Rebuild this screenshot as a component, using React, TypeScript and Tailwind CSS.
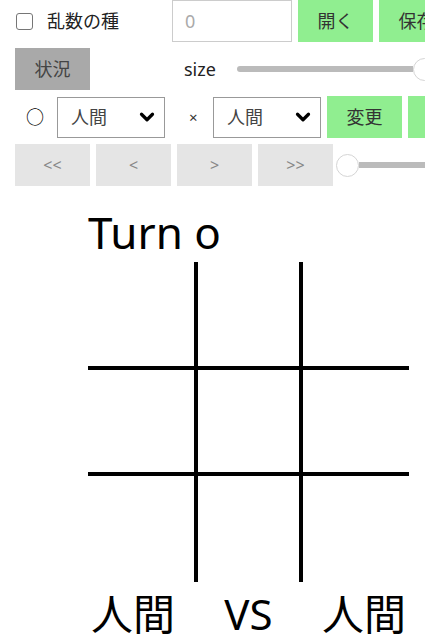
import { ChevronDown } from 'lucide-react'

const font = { fontFamily: '"Noto Sans", "Noto Sans CJK JP", sans-serif' }

function GreenButton({ label }: { label: string }) {
  return (
    <div className="flex h-[42px] w-[75px] shrink-0 items-center justify-center bg-[#90ee90] text-[18px] text-[#333]">
      {label}
    </div>
  )
}

function FakeSelect({ value }: { value: string }) {
  return (
    <div className="flex h-[41px] w-[108px] shrink-0 items-center justify-between border border-[#999] bg-white pl-[13px] pr-[6px] text-[18px] text-[#444]">
      <span>{value}</span>
      <ChevronDown className="h-[22px] w-[22px] text-black" strokeWidth={3.5} />
    </div>
  )
}

function NavButton({ label }: { label: string }) {
  return (
    <div className="flex h-[42px] w-[75px] shrink-0 items-center justify-center bg-[#e5e5e5] text-[16px] text-[#888]">
      {label}
    </div>
  )
}

function Thumb() {
  return <div className="h-[23px] w-[23px] shrink-0 rounded-full border border-[#d5d5d5] bg-white" />
}

export default function App() {
  return (
    <div className="w-[425px] h-[644px] overflow-hidden bg-white text-black" style={font}>
      <div className="w-[520px]">
        {/* row 1 */}
        <div className="flex h-[42px] items-center">
          <div className="ml-[16px] h-[17px] w-[17px] shrink-0 rounded-[3px] border-[1.5px] border-[#767676]" />
          <span className="ml-[14px] w-[125px] shrink-0 text-[18px] text-[#222]">乱数の種</span>
          <div className="flex h-[42px] w-[120px] shrink-0 items-center border border-[#ccc] pl-[12px] text-[18px] text-[#aaa]">
            0
          </div>
          <div className="ml-[6px] flex gap-[6px]">
            <GreenButton label="開く" />
            <GreenButton label="保存" />
          </div>
        </div>

        {/* row 2 */}
        <div className="mt-[6px] flex h-[42px] items-center">
          <div className="ml-[15px] flex h-[42px] w-[75px] shrink-0 items-center justify-center bg-[#a9a9a9] text-[18px] text-[#444]">
            状況
          </div>
          <span className="ml-[94px] w-[53px] shrink-0 text-[18px] text-[#222]">size</span>
          <div className="flex items-center">
            <div className="h-[6px] w-[176px] rounded-l-full bg-[#bbb]" />
            <Thumb />
          </div>
        </div>

        {/* row 3 */}
        <div className="mt-[6px] flex h-[42px] items-center">
          <span className="ml-[26px] w-[31px] shrink-0 text-[18px]">○</span>
          <FakeSelect value="人間" />
          <span className="ml-[24px] w-[24px] shrink-0 text-[15px] text-[#333]">×</span>
          <FakeSelect value="人間" />
          <div className="ml-[6px] flex gap-[6px]">
            <GreenButton label="変更" />
            <GreenButton label="開始" />
          </div>
        </div>

        {/* row 4 */}
        <div className="mt-[6px] flex h-[42px] items-center">
          <div className="ml-[15px] flex gap-[6px]">
            <NavButton label="<<" />
            <NavButton label="<" />
            <NavButton label=">" />
            <NavButton label=">>" />
          </div>
          <div className="ml-[3px] flex items-center">
            <Thumb />
            <div className="h-[6px] w-[160px] bg-[#bbb]" />
          </div>
        </div>

        {/* game */}
        <div className="ml-[88px] w-[321px]">
          <div className="mt-[16px] h-[60px] text-[44px] leading-[60px]">Turn o</div>
          <svg width="321" height="320" viewBox="0 0 321 320" className="block">
            <rect x="106" y="0" width="4" height="320" fill="#000" />
            <rect x="211" y="0" width="4" height="320" fill="#000" />
            <rect x="0" y="104" width="321" height="4" fill="#000" />
            <rect x="0" y="210" width="321" height="4" fill="#000" />
          </svg>
          <div className="mt-[3px] flex justify-between px-[3px] text-[42px] leading-[58px]">
            <span>人間</span>
            <span>VS</span>
            <span>人間</span>
          </div>
        </div>
      </div>
    </div>
  )
}
